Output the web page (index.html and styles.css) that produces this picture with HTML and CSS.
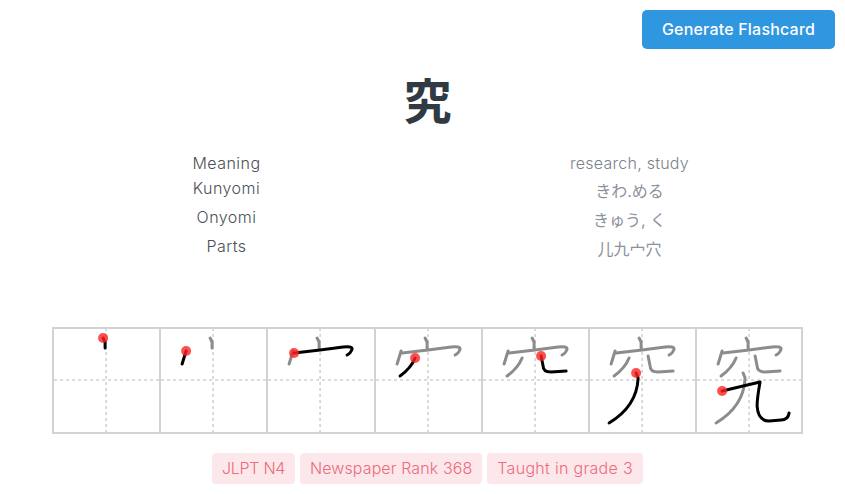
FILE: index.html
```html
<!DOCTYPE html>
<html lang="en">
<head>
<meta charset="utf-8">
<title>究</title>
<link rel="stylesheet" href="styles.css">
</head>
<body>
<svg class="defs" width="0" height="0" aria-hidden="true">
  <defs>
    <g id="guides" class="guides"><line x1="0" y1="52" x2="107" y2="52"/><line x1="52" y1="0" x2="52" y2="106"/></g>
    <path id="s1" d="M49 10 L51 14 L51 20"/>
    <path id="s2" d="M25 23 L21 36"/>
    <path id="s3" d="M26 25 L52 22 L75 19 Q84 18 84 21 Q83 25 79 27"/>
    <path id="s4" d="M39 30 Q35 40 24 48"/>
    <path id="s5" d="M58 28 L60 38 Q60 44 68 44 L83 43"/>
    <path id="s6" d="M46 45 L48 50 Q47 78 19 95"/>
    <path id="s7" d="M25 63 L46 58 L63 54 Q60 70 60 78 Q61 93 72 93 L84 92 Q91 92 92 85"/>
  </defs>
</svg>
<main class="page">
  <header class="top"><button class="btn">Generate Flashcard</button></header>
  <h1 class="kanji" lang="ja">究</h1>
  <section class="info">
    <div class="row row-first"><div class="label">Meaning</div><div class="value">research, study</div></div>
    <div class="row"><div class="label">Kunyomi</div><div class="value" lang="ja">きわ.める</div></div>
    <div class="row"><div class="label">Onyomi</div><div class="value" lang="ja">きゅう, く</div></div>
    <div class="row"><div class="label">Parts</div><div class="value" lang="ja">儿九宀穴</div></div>
  </section>
  <section class="strokes">
    <svg class="cell" viewBox="0 1 105 103"><use href="#guides"/><g class="cur"><use href="#s1"/></g><circle class="dot" cx="49" cy="10" r="5"/></svg>
    <svg class="cell" viewBox="0 1 105 103"><use href="#guides"/><g class="old"><use href="#s1"/></g><g class="cur"><use href="#s2"/></g><circle class="dot" cx="25" cy="23" r="5"/></svg>
    <svg class="cell" viewBox="0 1 105 103"><use href="#guides"/><g class="old"><use href="#s1"/><use href="#s2"/></g><g class="cur"><use href="#s3"/></g><circle class="dot" cx="26" cy="25" r="5"/></svg>
    <svg class="cell" viewBox="0 1 105 103"><use href="#guides"/><g class="old"><use href="#s1"/><use href="#s2"/><use href="#s3"/></g><g class="cur"><use href="#s4"/></g><circle class="dot" cx="39" cy="30" r="5"/></svg>
    <svg class="cell" viewBox="0 1 105 103"><use href="#guides"/><g class="old"><use href="#s1"/><use href="#s2"/><use href="#s3"/><use href="#s4"/></g><g class="cur"><use href="#s5"/></g><circle class="dot" cx="58" cy="28" r="5"/></svg>
    <svg class="cell" viewBox="0 1 105 103"><use href="#guides"/><g class="old"><use href="#s1"/><use href="#s2"/><use href="#s3"/><use href="#s4"/><use href="#s5"/></g><g class="cur"><use href="#s6"/></g><circle class="dot" cx="46" cy="45" r="5"/></svg>
    <svg class="cell" viewBox="0 1 105 103"><use href="#guides"/><g class="old"><use href="#s1"/><use href="#s2"/><use href="#s3"/><use href="#s4"/><use href="#s5"/><use href="#s6"/></g><g class="cur"><use href="#s7"/></g><circle class="dot" cx="25" cy="63" r="5"/></svg>
  </section>
  <footer class="tags">
    <span class="tag tag-short">JLPT N4</span>
    <span class="tag tag-mid">Newspaper Rank 368</span>
    <span class="tag tag-long">Taught in grade 3</span>
  </footer>
</main>
</body>
</html>
```
FILE: styles.css
```css
* { box-sizing: border-box; }
html, body { margin: 0; padding: 0; background: #fff; }
body { font-family: Inter, "Noto Sans CJK JP", sans-serif; overflow: hidden; }
.defs { position: absolute; }
.page { width: 845px; height: 494px; display: flex; flex-direction: column; padding: 10px 10px 0 0; }
.top { display: flex; justify-content: flex-end; }
.btn { width: 193px; height: 39px; border: 0; border-radius: 5px; background: #2f96e0; color: #fff; font: 500 16px/39px Inter, sans-serif; letter-spacing: .2px; padding: 0; }
.kanji { margin: 19px 0 0; padding-left: 20px; height: 83px; text-align: center; font: 700 48px/60px "Noto Sans CJK JP", sans-serif; color: #2f3a43; }
.info { display: flex; flex-direction: column; padding-left: 25px; }
.row { display: grid; grid-template-columns: 403px 403px; height: 29px; text-align: center; }
.row-first { height: 25px; }
.label { font-size: 16px; font-weight: 300; letter-spacing: .45px; line-height: 24px; color: #4a5058; }
.value { font-size: 16px; line-height: 30px; color: #8b929b; }
.row-first .value { font-weight: 300; letter-spacing: .25px; line-height: 24px; color: #7b828b; }
.strokes { display: flex; width: 751px; height: 107px; margin: 64px 0 0 52px; border: 2px solid #d2d2d2; background: #d2d2d2; overflow: hidden; }
.cell { flex: 0 0 105.2px; height: 103px; fill: none; background: #fff; }
.cell + .cell { margin-left: 2px; }
.guides line { stroke: #cfcfcf; stroke-width: 1.5; stroke-dasharray: 3 3; }
.old { fill: none; stroke: #8c8c8c; stroke-width: 3; stroke-linecap: round; stroke-linejoin: round; }
.cur { fill: none; stroke: #000; stroke-width: 3; stroke-linecap: round; stroke-linejoin: round; }
.dot { fill: #f22; fill-opacity: .8; stroke: none; }
.tags { display: flex; justify-content: center; gap: 5px; margin-top: 19px; padding-left: 20px; }
.tag { height: 31px; padding: 0 10px; border-radius: 4px; background: #fce8ea; color: #ee6a7c; font-size: 16px; font-weight: 300; line-height: 31px; }
.tag-short { letter-spacing: -.3px; }
.tag-mid { letter-spacing: .1px; }
.tag-long { letter-spacing: .3px; }
```
